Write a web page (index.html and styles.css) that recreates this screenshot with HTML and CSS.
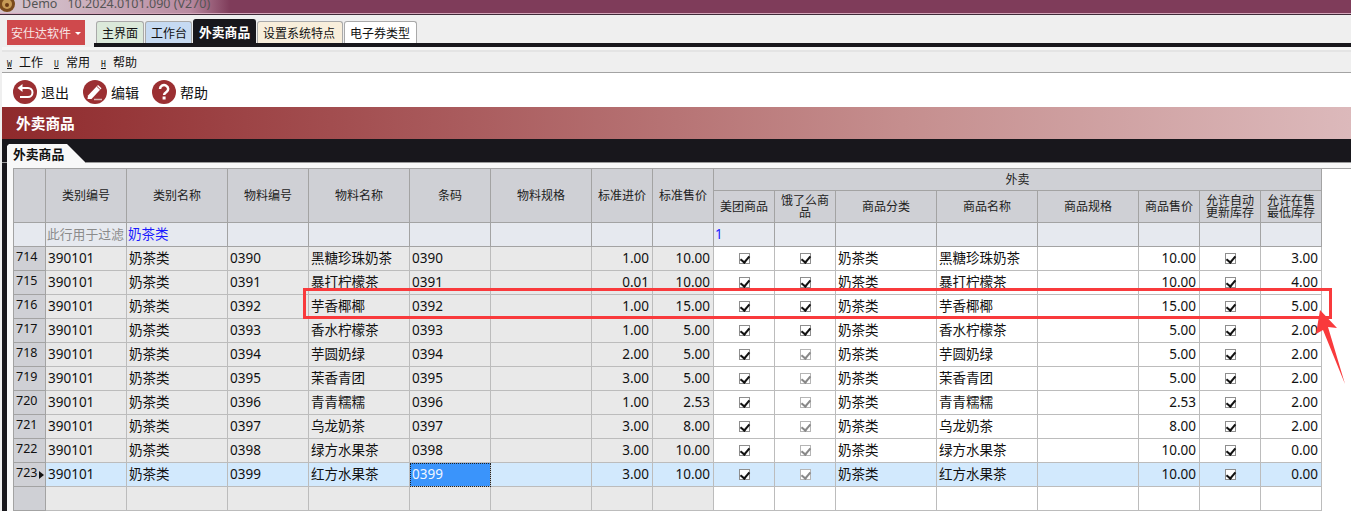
FILE: index.html
```html
<!DOCTYPE html>
<html lang="zh-CN">
<head>
<meta charset="utf-8">
<title>外卖商品</title>
<link rel="stylesheet" href="styles.css">
</head>
<body>
<header class="titlebar">
  <svg class="logo" width="16" height="14" viewBox="0 0 16 14"><circle cx="7" cy="4" r="8" fill="#7a4a1c"/><circle cx="7" cy="4" r="5" fill="#c79a55"/><circle cx="7" cy="5" r="2" fill="#6b3a14"/></svg>
  <span class="titletext">Demo</span><span class="titletext ver">10.2024.0101.090 (V270)</span>
</header>
<nav class="tabbar">
  <button class="brand">安仕达软件<i class="caret"></i></button>
  <div class="tabs">
    <span class="tab t-green">主界面</span>
    <span class="tab t-blue">工作台</span>
    <span class="tab t-active">外卖商品</span>
    <span class="tab t-cream">设置系统特点</span>
    <span class="tab t-white">电子券类型</span>
  </div>
</nav>
<div class="workspace">
  <div class="menubar">
    <span class="menu"><u>W</u>工作</span>
    <span class="menu"><u>U</u>常用</span>
    <span class="menu"><u>H</u>帮助</span>
  </div>
  <div class="toolbar">
    <span class="tool"><svg width="24" height="24" viewBox="0 0 24 24"><circle cx="12" cy="12" r="12" fill="#9b2f32"/><path d="M8 8h7a4.500 4.500 0 0 1 0 9H7" fill="none" stroke="#fff" stroke-width="2"/><path d="M9.500 4v8l-5-4z" fill="#fff"/></svg>退出</span>
    <span class="tool"><svg width="24" height="24" viewBox="0 0 24 24"><circle cx="12" cy="12" r="12" fill="#9b2f32"/><path d="M5 15.500 15 5l3.500 3.300L8.500 19H4.500z" fill="#fff"/><path d="M14 6.500l3.500 3.300" stroke="#9b2f32" fill="none"/><path d="M11 19.500h8" stroke="#dcb5b5" stroke-width="1.500"/></svg>编辑</span>
    <span class="tool"><svg width="24" height="24" viewBox="0 0 24 24"><circle cx="12" cy="12" r="12" fill="#9b2f32"/><path d="M8 9a4.100 3.800 0 1 1 6.300 3.100c-1.500 1-2.200 1.400-2.200 3" fill="none" stroke="#fff" stroke-width="2.500"/><rect x="10.600" y="16.500" width="3" height="3" fill="#fff"/></svg>帮助</span>
  </div>
  <div class="band">外卖商品</div>
  <div class="pagetabs"><span class="pagetab">外卖商品</span></div>
  <main class="content">
    <div class="gridwrap">
    <table class="grid">
      <colgroup>
        <col class="c-h"><col class="c-81"><col class="c-101"><col class="c-81"><col class="c-101"><col class="c-81"><col class="c-101"><col class="c-61"><col class="c-61"><col class="c-61"><col class="c-61"><col class="c-101"><col class="c-101"><col class="c-101"><col class="c-61"><col class="c-61"><col class="c-61">
      </colgroup>
      <thead>
        <tr class="hr1">
          <th rowspan="2"></th><th rowspan="2">类别编号</th><th rowspan="2">类别名称</th><th rowspan="2">物料编号</th><th rowspan="2">物料名称</th><th rowspan="2">条码</th><th rowspan="2">物料规格</th><th rowspan="2">标准进价</th><th rowspan="2">标准售价</th>
          <th colspan="8">外卖</th>
        </tr>
        <tr class="hr2">
          <th>美团商品</th><th class="tight">饿了么商品</th><th>商品分类</th><th>商品名称</th><th>商品规格</th><th>商品售价</th><th class="tight">允许自动更新库存</th><th class="tight">允许在售最低库存</th>
        </tr>
      </thead>
      <tbody>
        <tr class="filter"><th></th><td class="hint">此行用于过滤</td><td class="blue">奶茶类</td><td></td><td></td><td></td><td></td><td></td><td></td><td class="blue">1</td><td></td><td></td><td></td><td></td><td></td><td></td><td></td></tr>
        <tr><th>714</th><td>390101</td><td>奶茶类</td><td>0390</td><td>黑糖珍珠奶茶</td><td>0390</td><td></td><td class="n">1.00</td><td class="n">10.00</td><td class="w ck"><i class="cb"></i></td><td class="w ck"><i class="cb"></i></td><td class="w">奶茶类</td><td class="w">黑糖珍珠奶茶</td><td class="w"></td><td class="w n">10.00</td><td class="w ck"><i class="cb"></i></td><td class="w n">3.00</td></tr>
        <tr><th>715</th><td>390101</td><td>奶茶类</td><td>0391</td><td>暴打柠檬茶</td><td>0391</td><td></td><td class="n">0.01</td><td class="n">10.00</td><td class="w ck"><i class="cb"></i></td><td class="w ck"><i class="cb"></i></td><td class="w">奶茶类</td><td class="w">暴打柠檬茶</td><td class="w"></td><td class="w n">10.00</td><td class="w ck"><i class="cb"></i></td><td class="w n">4.00</td></tr>
        <tr><th>716</th><td>390101</td><td>奶茶类</td><td>0392</td><td>芋香椰椰</td><td>0392</td><td></td><td class="n">1.00</td><td class="n">15.00</td><td class="w ck"><i class="cb"></i></td><td class="w ck"><i class="cb"></i></td><td class="w">奶茶类</td><td class="w">芋香椰椰</td><td class="w"></td><td class="w n">15.00</td><td class="w ck"><i class="cb"></i></td><td class="w n">5.00</td></tr>
        <tr><th>717</th><td>390101</td><td>奶茶类</td><td>0393</td><td>香水柠檬茶</td><td>0393</td><td></td><td class="n">1.00</td><td class="n">5.00</td><td class="w ck"><i class="cb"></i></td><td class="w ck"><i class="cb"></i></td><td class="w">奶茶类</td><td class="w">香水柠檬茶</td><td class="w"></td><td class="w n">5.00</td><td class="w ck"><i class="cb"></i></td><td class="w n">2.00</td></tr>
        <tr><th>718</th><td>390101</td><td>奶茶类</td><td>0394</td><td>芋圆奶绿</td><td>0394</td><td></td><td class="n">2.00</td><td class="n">5.00</td><td class="w ck"><i class="cb"></i></td><td class="w ck"><i class="cb off"></i></td><td class="w">奶茶类</td><td class="w">芋圆奶绿</td><td class="w"></td><td class="w n">5.00</td><td class="w ck"><i class="cb"></i></td><td class="w n">2.00</td></tr>
        <tr><th>719</th><td>390101</td><td>奶茶类</td><td>0395</td><td>茉香青团</td><td>0395</td><td></td><td class="n">3.00</td><td class="n">5.00</td><td class="w ck"><i class="cb"></i></td><td class="w ck"><i class="cb off"></i></td><td class="w">奶茶类</td><td class="w">茉香青团</td><td class="w"></td><td class="w n">5.00</td><td class="w ck"><i class="cb"></i></td><td class="w n">2.00</td></tr>
        <tr><th>720</th><td>390101</td><td>奶茶类</td><td>0396</td><td>青青糯糯</td><td>0396</td><td></td><td class="n">1.00</td><td class="n">2.53</td><td class="w ck"><i class="cb"></i></td><td class="w ck"><i class="cb off"></i></td><td class="w">奶茶类</td><td class="w">青青糯糯</td><td class="w"></td><td class="w n">2.53</td><td class="w ck"><i class="cb"></i></td><td class="w n">2.00</td></tr>
        <tr><th>721</th><td>390101</td><td>奶茶类</td><td>0397</td><td>乌龙奶茶</td><td>0397</td><td></td><td class="n">3.00</td><td class="n">8.00</td><td class="w ck"><i class="cb"></i></td><td class="w ck"><i class="cb off"></i></td><td class="w">奶茶类</td><td class="w">乌龙奶茶</td><td class="w"></td><td class="w n">8.00</td><td class="w ck"><i class="cb"></i></td><td class="w n">2.00</td></tr>
        <tr><th>722</th><td>390101</td><td>奶茶类</td><td>0398</td><td>绿方水果茶</td><td>0398</td><td></td><td class="n">3.00</td><td class="n">10.00</td><td class="w ck"><i class="cb"></i></td><td class="w ck"><i class="cb off"></i></td><td class="w">奶茶类</td><td class="w">绿方水果茶</td><td class="w"></td><td class="w n">10.00</td><td class="w ck"><i class="cb"></i></td><td class="w n">0.00</td></tr>
        <tr class="sel"><th class="cur">723</th><td>390101</td><td>奶茶类</td><td>0399</td><td>红方水果茶</td><td class="focus">0399</td><td></td><td class="n">3.00</td><td class="n">10.00</td><td class="ck"><i class="cb"></i></td><td class="ck"><i class="cb off"></i></td><td>奶茶类</td><td>红方水果茶</td><td></td><td class="n">10.00</td><td class="ck"><i class="cb"></i></td><td class="n">0.00</td></tr>
        <tr><th></th><td></td><td></td><td></td><td></td><td></td><td></td><td></td><td></td><td class="w"></td><td class="w"></td><td class="w"></td><td class="w"></td><td class="w"></td><td class="w"></td><td class="w"></td><td class="w"></td></tr>
      </tbody>
    </table>
    </div>
  </main>
</div>
<div class="mark-box"></div>
<svg class="mark-arrow" width="34" height="78" viewBox="0 0 34 78"><polygon points="4,0 21,18 12,17 29,74 7,20 0,24" fill="#f93a3c"/></svg>
</body>
</html>
```
FILE: styles.css
```css
* { box-sizing: border-box; }
html, body { margin: 0; padding: 0; height: 511px; overflow: hidden; }
body {
  position: relative;
  background: #efefef;
  font-family: "Noto Sans", "Noto Sans CJK SC", sans-serif;
  font-size: 13px;
  color: #111;
}
.titlebar {
  height: 15px;
  display: flex;
  align-items: center;
  overflow: hidden;
  background: linear-gradient(90deg, #d4c3cc 0, #d0b9c5 60px, #b98aa0 190px, #7f3c5a 230px, #7f3c5a 100%);
  border-bottom: 1px solid #3f2a38;
  box-shadow: inset 0 -1px 0 #d5a8bc;
}
.logo { flex: none; margin-right: 6px; }
.titletext { font-size: 12.500px; color: #555; line-height: 14px; position: relative; top: -3px; }
.ver { margin-left: 10px; }
.tabbar { height: 32px; display: flex; align-items: flex-start; padding: 5px 0 0 7px; }
.brand {
  width: 78px; height: 25px; padding: 0 0 0 4px; border: 0;
  display: flex; align-items: center; white-space: nowrap;
  background: #cf494c; color: #f7e4e4;
  font: 12px "Noto Sans CJK SC", sans-serif;
}
.caret { margin-left: 4px; margin-top: 2px; border: 3px solid transparent; border-top-color: #fff; border-bottom: 0; }
.tabs {
  flex: 1; height: 27px; margin-left: 9px; padding-left: 2px;
  display: flex; align-items: flex-start; gap: 1px;
  border-bottom: 4px solid #18171c;
}
.tab {
  height: 22px; padding: 0 5px; display: flex; align-items: center;
  margin-top: 1px;
  border: 1px solid #a9a9a9; border-bottom: 0; border-radius: 3px 3px 0 0;
  font-size: 12px; white-space: nowrap;
}
.t-green { background: #dbe9da; width: 48px; }
.t-blue { background: #c6daf2; width: 47px; }
.t-active { background: #18171c; color: #fff; font-weight: 700; width: 63px; height: 24px; margin-top: -1px; border-color: #18171c; font-size: 12.800px; padding: 0 5px; }
.t-cream { background: #f8eedb; width: 86px; }
.t-white { background: #fff; width: 73px; }
.workspace { padding-left: 2px; background: #efefef; }
.menubar {
  height: 26px; padding: 5px 0 0 5px;
  display: flex; align-items: center; gap: 11px;
  background: linear-gradient(#f5f5f5 3px, #e4e4e4 3px, #e4e4e4 5px, #efefef 5px);
  border-bottom: 1px solid #a3a3a3;
  font-size: 12px;
}
.menu u { display: inline-block; width: 6px; font-size: 8px; margin-right: 6px; font-family: "DejaVu Sans Mono", monospace; }
.toolbar { height: 34px; background: #fff; padding: 4px 0 0 11px; display: flex; align-items: center; }
.tool { display: flex; align-items: center; gap: 4px; margin-right: 14px; font-size: 14px; }
.tool:nth-child(2) { margin-right: 13px; }
.band {
  height: 32px; padding: 0 0 2px 14px; display: flex; align-items: center;
  background: linear-gradient(90deg, #8f2a2c 0, #a95a5c 450px, #c58e8e 900px, #dcb9bb 100%);
  color: #fff; font-weight: 700; font-size: 14.700px;
}
.pagetabs { height: 24px; background: #18171c; padding: 5px 0 0 5px; border-bottom: 1px solid #9a9a9a; }
.pagetab {
  display: block; width: 78px; height: 19px; padding: 1px 0 0 6px;
  background: #f8f8f8; font-weight: 700; font-size: 12.800px; line-height: 18px;
  clip-path: polygon(0 2px, 2px 0, 60px 0, 78px 18px, 78px 19px, 0 19px);
}
.content { border-left: 5px solid #18171c; background: #f8f8f8; padding: 5px 0 0 6px; height: 348px; }
.gridwrap { background: #fff; height: 343px; box-shadow: inset 0 1px 0 #a3a3a3; }
.grid {
  table-layout: fixed; border-collapse: collapse;
  width: 1309px;
  font-size: 13.500px;
}
.c-h { width: 32px; } .c-81 { width: 81px; } .c-101 { width: 101px; } .c-61 { width: 61px; }
th, td { border: 1px solid #bcbcbc; padding: 0 3px 2px 2px; height: 24px; overflow: hidden; white-space: nowrap; font-weight: 400; background: #e9e9e9; line-height: 18px; }
thead th { background: #cfd0d5; border-color: #a3a3a3; font-size: 12px; text-align: center; color: #222; white-space: normal; padding: 0 2px; }
.hr1 th { height: 22px; }
.hr2 th { height: 32px; padding-top: 1px; }
thead th.tight { line-height: 12px; padding: 1px 3px 0; }
tbody th { background: #cfd0d5; border-color: #a3a3a3; text-align: left; font-size: 12.500px; padding: 0 0 4px 2px; }
.filter td { background: #e6e9ef; border-color: #a3a3a3; }
.filter th { background: #e6e9ef; }
td.hint { color: #8b8b8b; font-size: 12.800px; padding-left: 1px; }
td.blue { color: #1a1aff; padding-left: 1px; }
td.w { background: #fff; }
.n { text-align: right; }
td.ck { text-align: center; padding: 0 2px 2px; }
.sel td { background: #d2e9fd; }
.sel td.focus { background: #3a94fb; color: #f0f6ff; outline: 1px dotted #222; outline-offset: -1px; }
.cur { position: relative; }
.cur::after { content: ""; position: absolute; right: 1px; top: 8px; border: 4px solid transparent; border-left: 5px solid #111; border-right: 0; }
.cb { display: inline-block; width: 11px; height: 11px; background: #fff; border: 1px solid #8e8e8e; position: relative; vertical-align: -1px; }
.cb::after { content: ""; position: absolute; left: 2.500px; top: 0; width: 4px; height: 7px; border: solid #111; border-width: 0 2px 2px 0; transform: rotate(40deg); }
.cb.off { border-color: #b5b5b5; }
.cb.off::after { border-color: #888; }
.mark-box { position: absolute; left: 303px; top: 288px; width: 1029px; height: 31px; border: 3px solid #f93a3c; }
.mark-arrow { position: absolute; left: 1316px; top: 310px; }
```
